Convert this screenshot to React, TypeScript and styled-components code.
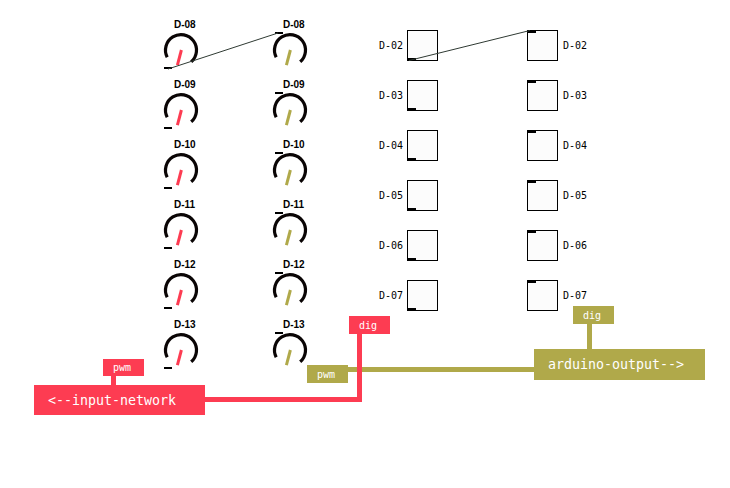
import React from "react"
import styled, { createGlobalStyle } from "styled-components"

const RED = "#fd3c52"
const OLIVE = "#b0a94a"

const GlobalStyle = createGlobalStyle`
  html, body {
    margin: 0;
    padding: 0;
    background: #ffffff;
  }
  body {
    font-family: "DejaVu Sans Mono", monospace;
  }
`

const Canvas = styled.div`
  position: relative;
  width: 730px;
  height: 488px;
  overflow: hidden;
  background: #ffffff;
`

// knobs
const KnobColumn = styled.div<{ $x: number }>`
  position: absolute;
  left: ${(p) => p.$x}px;
  top: 19px;
  display: flex;
  flex-direction: column;
`

const KnobCell = styled.div`
  height: 60px;
  display: flex;
  flex-direction: column;
  gap: 2px;
`

const KnobLabel = styled.div`
  margin-left: 10px;
  height: 12px;
  line-height: 12px;
  font-family: "Liberation Sans", Arial, sans-serif;
  font-weight: bold;
  font-size: 10px;
  color: #000;
`

const KnobBody = styled.div`
  position: relative;
  width: 34px;
  height: 34px;

  svg {
    display: block;
    overflow: visible;
  }
`

const Port = styled.span<{ $side: "top" | "bottom" }>`
  position: absolute;
  left: ${(p) => (p.$side === "top" ? 2 : 0)}px;
  ${(p) => (p.$side === "top" ? "top: -1px;" : "bottom: -2px;")}
  width: 8px;
  height: 2px;
  background: #000;
`

function Knob({ label, color, port }: { label: string; color: string; port: "top" | "bottom" }) {
  return (
    <KnobCell>
      <KnobLabel>{label}</KnobLabel>
      <KnobBody>
        <svg width="34" height="34" viewBox="0 0 34 34">
          <path d="M 3.2 24.2 A 15.5 15.5 0 1 1 27.2 28.8" fill="none" stroke="#0a0505" strokeWidth="3.2" />
          <line x1="17.4" y1="17" x2="13.4" y2="32.2" stroke={color} strokeWidth="3" />
        </svg>
        <Port $side={port} />
      </KnobBody>
    </KnobCell>
  )
}

// toggles
const ToggleColumn = styled.div<{ $x: number }>`
  position: absolute;
  left: ${(p) => p.$x}px;
  top: 30px;
  display: flex;
  flex-direction: column;
  gap: 19px;
`

const ToggleRow = styled.div<{ $reverse?: boolean }>`
  display: flex;
  flex-direction: ${(p) => (p.$reverse ? "row-reverse" : "row")};
  justify-content: flex-end;
  align-items: center;
  gap: ${(p) => (p.$reverse ? 5 : 4)}px;
  height: 31px;
`

const ToggleLabel = styled.span`
  font-family: "DejaVu Sans Mono", monospace;
  font-size: 10px;
  color: #000;
`

const ToggleBox = styled.div`
  position: relative;
  box-sizing: border-box;
  width: 31px;
  height: 31px;
  border: 1px solid #000;
  background: #fcfcfc;
`

const ToggleMark = styled.span<{ $side: "top" | "bottom" }>`
  position: absolute;
  left: 0;
  ${(p) => (p.$side === "top" ? "top: 0;" : "bottom: 0;")}
  width: 8px;
  height: 2px;
  background: #000;
`

function Toggle({ label, side }: { label: string; side: "left" | "right" }) {
  return (
    <ToggleRow $reverse={side === "right"}>
      <ToggleLabel>{label}</ToggleLabel>
      <ToggleBox>
        <ToggleMark $side={side === "left" ? "bottom" : "top"} />
      </ToggleBox>
    </ToggleRow>
  )
}

// tags (comment canvases of the patch)
const TagGroup = styled.div<{ $x: number; $y: number }>`
  position: absolute;
  left: ${(p) => p.$x}px;
  top: ${(p) => p.$y}px;
  display: flex;
  flex-direction: column;
  align-items: flex-start;
`

const SmallTag = styled.div<{ $bg: string; $h?: number; $indent?: number }>`
  box-sizing: border-box;
  width: 41px;
  height: ${(p) => p.$h ?? 18}px;
  margin-left: ${(p) => p.$indent ?? 0}px;
  padding-left: 10px;
  display: flex;
  align-items: center;
  background: ${(p) => p.$bg};
  color: #fff;
  font-family: "DejaVu Sans Mono", monospace;
  font-size: 10px;
`

const Stub = styled.div<{ $bg: string; $h: number; $indent: number }>`
  width: 5px;
  height: ${(p) => p.$h}px;
  margin-left: ${(p) => p.$indent}px;
  background: ${(p) => p.$bg};
`

const BigTag = styled.div<{ $bg: string; $h: number }>`
  box-sizing: border-box;
  width: 171px;
  height: ${(p) => p.$h}px;
  padding-left: 14px;
  display: flex;
  align-items: center;
  background: ${(p) => p.$bg};
  color: #fff;
  font-family: "DejaVu Sans Mono", monospace;
  font-size: 13.3px;
  white-space: pre;
`

const LoneTag = styled(SmallTag)<{ $x: number; $y: number }>`
  position: absolute;
  left: ${(p) => p.$x}px;
  top: ${(p) => p.$y}px;
`

const Cords = styled.svg`
  position: absolute;
  left: 0;
  top: 0;
  pointer-events: none;
`

const rows = ["08", "09", "10", "11", "12", "13"]
const toggles = ["02", "03", "04", "05", "06", "07"]

export default function App() {
  return (
    <>
      <GlobalStyle />
      <Canvas>
        <KnobColumn $x={164}>
          {rows.map((r) => (
            <Knob key={r} label={`D-${r}`} color={RED} port="bottom" />
          ))}
        </KnobColumn>
        <KnobColumn $x={273}>
          {rows.map((r) => (
            <Knob key={r} label={`D-${r}`} color={OLIVE} port="top" />
          ))}
        </KnobColumn>

        <ToggleColumn $x={379}>
          {toggles.map((t) => (
            <Toggle key={t} label={`D-${t}`} side="left" />
          ))}
        </ToggleColumn>
        <ToggleColumn $x={527}>
          {toggles.map((t) => (
            <Toggle key={t} label={`D-${t}`} side="right" />
          ))}
        </ToggleColumn>

        <Cords width="730" height="488">
          <line x1="168" y1="69" x2="278" y2="33" stroke="#2f3a33" strokeWidth="1" />
          <line x1="409" y1="60.5" x2="530" y2="30.5" stroke="#2f3a33" strokeWidth="1" />
          <line x1="348" y1="369.5" x2="534" y2="369.5" stroke={OLIVE} strokeWidth="5" />
          <polyline points="205,399.5 359.5,399.5 359.5,334" fill="none" stroke={RED} strokeWidth="5" />
        </Cords>

        <TagGroup $x={34} $y={359}>
          <SmallTag $bg={RED} $h={17} $indent={69}>pwm</SmallTag>
          <Stub $bg={RED} $h={9} $indent={77} />
          <BigTag $bg={RED} $h={30}>{"<--input-network"}</BigTag>
        </TagGroup>

        <TagGroup $x={534} $y={306}>
          <SmallTag $bg={OLIVE} $indent={39}>dig</SmallTag>
          <Stub $bg={OLIVE} $h={25} $indent={53} />
          <BigTag $bg={OLIVE} $h={31}>{"arduino-output-->"}</BigTag>
        </TagGroup>

        <LoneTag $bg={RED} $x={349} $y={316}>dig</LoneTag>
        <LoneTag $bg={OLIVE} $x={307} $y={365}>pwm</LoneTag>
      </Canvas>
    </>
  )
}
